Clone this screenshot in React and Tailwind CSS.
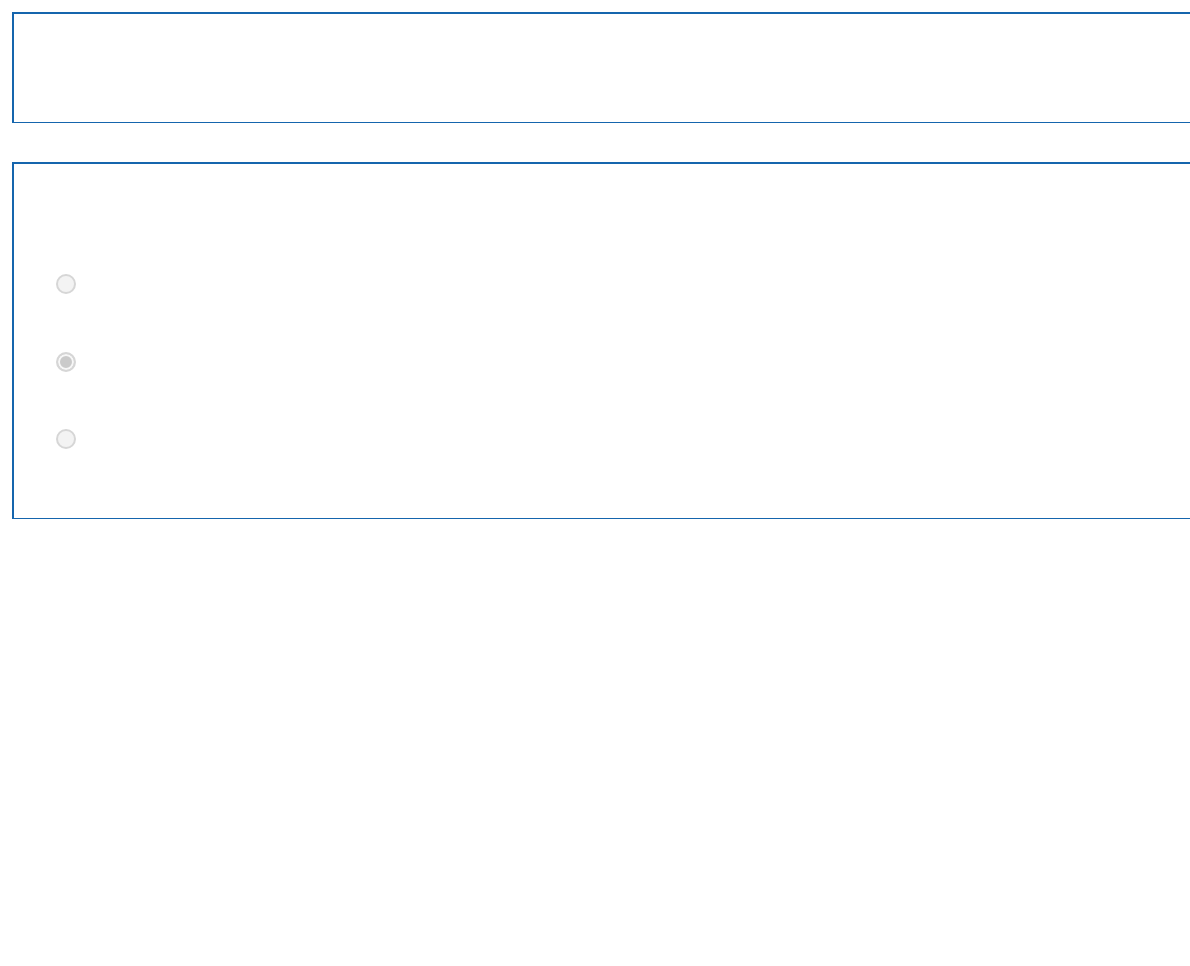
import React from "react";

const options = [
  { id: "opt-1", checked: false, mt: "mt-0" },
  { id: "opt-2", checked: true, mt: "mt-[58px]" },
  { id: "opt-3", checked: false, mt: "mt-[57px]" },
];

export default function App() {
  return (
    <div className="min-h-[966px] w-full overflow-hidden bg-white pl-3 pt-3 font-['Liberation_Sans',sans-serif]">
      {/* top panel */}
      <div className="h-[111px] w-[1200px] border-t-2 border-l-2 border-b border-[#1565ad]" />

      {/* options panel */}
      <fieldset className="mt-[39px] flex w-[1200px] flex-col border-t-2 border-l-2 border-b border-[#1565ad] pl-[42px] pt-[110px] pb-[69px]">
        {options.map((o) => (
          <div key={o.id} className={`flex items-center ${o.mt}`}>
            <input
              type="radio"
              name="choice"
              id={o.id}
              disabled
              defaultChecked={o.checked}
              className="m-0 h-5 w-5 appearance-none rounded-full border-2 border-[#d6d6d6] bg-[#f3f3f3] checked:bg-[#cacaca] checked:shadow-[inset_0_0_0_2px_#f7f7f7]"
            />
          </div>
        ))}
      </fieldset>
    </div>
  );
}
